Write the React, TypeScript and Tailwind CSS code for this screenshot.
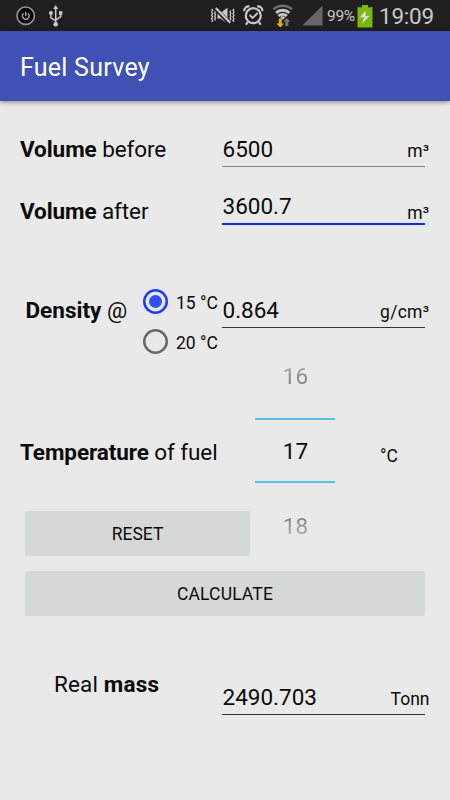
import { useState } from 'react';
import type { ReactNode } from 'react';

const StatusBar = () => (
    <div className="flex h-[31px] items-center bg-[#1f1f1f] text-[#c8c8c8]">
        {/* Notifications */}
        <svg className="ml-4 shrink-0" width="20" height="20" viewBox="0 0 20 20" fill="none">
            <circle cx="9.7" cy="9.7" r="8.7" fill="#050505" stroke="#929292" strokeWidth="1.7" />
            <path d="M7.5 7.4a3.4 3.4 0 1 0 4.5 0M9.75 5.7v4.2" stroke="#a0a0a0" strokeWidth="1.5" />
        </svg>
        <svg className="ml-3 shrink-0" width="16" height="24" viewBox="0 0 16 24" fill="none" stroke="currentColor" strokeWidth="1.5">
            <path d="M7.7 3.5v17M2.8 9.5v4l4.9 3.4M12.7 9.5v3l-5 3.6" />
            <path d="m7.7 1-2.5 4h5z" fill="currentColor" stroke="none" />
            <circle cx="2.9" cy="9" r="2" fill="currentColor" stroke="none" />
            <path d="M11 7.2h3.4v3.6H11z" fill="currentColor" stroke="none" />
            <circle cx="7.7" cy="20.3" r="2.3" fill="currentColor" stroke="none" />
        </svg>

        {/* System icons */}
        <svg className="ml-[146px] shrink-0" width="26" height="20" viewBox="0 0 26 20" fill="none" stroke="currentColor">
            <path d="m1.6 3 1 1.3-1 1.7 1 1.7-1 1.7 1 1.7-1 1.7 1 1.7-1 1.5M4.7 4.5l.8 1.2-.8 1.5.8 1.5-.8 1.5.8 1.5-.8 1.5.8 1.3M24 3l-1 1.3 1 1.7-1 1.7 1 1.7-1 1.7 1 1.7-1 1.7 1 1.5M20.8 4.5 20 5.7l.8 1.5-.8 1.5.8 1.5-.8 1.5.8 1.5-.8 1.3" strokeWidth="1.3" />
            <path d="M7.5 6.8h3l7-5v15.8l-7-5h-3z" fill="currentColor" stroke="none" />
            <path d="M5.5 2.5 20 17.5" stroke="#1f1f1f" strokeWidth="4.2" />
            <path d="M5.8 2 20.2 16.8" strokeWidth="2.2" />
        </svg>
        <svg className="ml-[7px] shrink-0" width="21" height="21" viewBox="0 0 21 21" fill="none" stroke="currentColor">
            <circle cx="10.3" cy="10.7" r="7.5" strokeWidth="2.2" />
            <path d="m6.6 10 3 3 5-5" strokeWidth="1.9" />
            <path d="M1.2 6.2A4.5 4.5 0 0 1 6.5 1.4M14.2 1.4a4.5 4.5 0 0 1 5.2 4.8M4.6 17 3 19.8M16 17l1.6 2.8" strokeWidth="2.2" />
        </svg>
        <svg className="ml-2 shrink-0" width="22" height="24" viewBox="0 0 22 24" fill="none">
            <path d="M1.4 5.3a14 14 0 0 1 18.6 0" stroke="#6e6e6e" strokeWidth="2.6" />
            <path d="M4.1 8.8a10 10 0 0 1 13.2 0M6.5 12a6.4 6.4 0 0 1 8.4 0" stroke="#c8c8c8" strokeWidth="2.9" />
            <path d="M10.7 12.2c-1.2 0-2 .3-2.6.8l2.6 3 2.6-3c-.6-.5-1.4-.8-2.6-.8z" fill="#c8c8c8" />
            <path d="M6.8 14.5h3v5H12l-3.7 4-3.8-4h2.3z" fill="#e0b010" />
            <path d="M13.3 22v-4.2h-2L14.8 14l3.5 3.8h-2V22z" fill="#777" />
        </svg>
        <svg className="ml-2 shrink-0" width="21" height="21" viewBox="0 0 21 21">
            <path d="M20.5.5v20H.3z" fill="#666" />
        </svg>
        <span className="ml-1 w-[30px] whitespace-nowrap pt-px text-[15.5px] leading-5 tracking-[-0.3px]">99%</span>
        <svg className="mt-px shrink-0" width="16" height="23" viewBox="0 0 16 23">
            <path d="M5 0h6v2.2h4.5v20.3H.5V2.2H5z" fill="#7cb70f" />
            <path d="m8.8 5.6-6 7 4.2-.3-2 6.5 7.8-8-4.3.2z" fill="#deded8" />
        </svg>
        <span className="ml-[6px] text-[22.5px] leading-[26px] tracking-[-0.25px]">19:09</span>
    </div>
);

interface FieldProps {
    value: string;
    unit: string;
    className: string;
    unitClassName: string;
}

const Field = ({ value, unit, className, unitClassName }: FieldProps) => (
    <div className={`relative w-[203px] pl-[0.5px] leading-[26px] ${className}`}>
        {value}
        <span className={`absolute -right-[4.5px] text-[17.5px] leading-5 ${unitClassName}`}>{unit}</span>
    </div>
);

const Label = ({ className, children }: { className: string; children: ReactNode }) => (
    <div className={`w-[222px] shrink-0 whitespace-nowrap leading-[26px] ${className}`}>{children}</div>
);

export default function App() {
    const [base, setBase] = useState(15);

    return (
        <div className="flex h-[800px] w-[450px] flex-col overflow-hidden bg-[#e9e9e9] font-[Roboto,sans-serif] text-[22.5px] text-[#0b0b0b]">
            <StatusBar />
            <header className="z-10 h-[70px] bg-[#3f51b5] pl-5 pt-[21px] text-[25px] leading-8 tracking-[0.25px] text-white shadow-[0_1px_5px_rgba(0,0,0,0.45)]">
                Fuel Survey
            </header>

            <main>
                <div className="flex h-[91px] pt-[35px]">
                    <Label className="pl-5 tracking-[-0.08px]"><b>Volume</b> before</Label>
                    <Field value="6500" unit="m³" className="h-[31px] border-b border-[#858585]" unitClassName="top-[5px] tracking-[0.3px]" />
                </div>
                <div className="flex h-[96px]">
                    <Label className="pl-5 pt-[6px] tracking-[-0.1px]"><b>Volume</b> after</Label>
                    <Field value="3600.7" unit="m³" className="h-[33px] border-b-2 border-[#0a2cff] pt-px" unitClassName="top-[11px] tracking-[0.3px]" />
                </div>

                <div className="flex h-[72px]">
                    <div className="flex w-[222px] shrink-0">
                        <div className="w-[118px] whitespace-nowrap pl-[25.5px] pt-[9px] leading-[26px]"><b>Density</b> @</div>
                        <div className="flex flex-col pl-[25px] pt-px">
                            {[15, 20].map((t) => (
                                <button
                                    key={t}
                                    onClick={() => setBase(t)}
                                    className="flex h-10 w-[79px] shrink-0 items-start gap-2 whitespace-nowrap text-[17.5px] leading-5"
                                >
                                    <span
                                        className={`flex size-[25px] shrink-0 items-center justify-center rounded-full ${base === t ? 'shadow-[inset_0_0_0_2.5px_#1c3cff]' : 'shadow-[inset_0_0_0_2.5px_#686868]'
                                            }`}
                                    >
                                        {base === t && <span className="size-[13px] rounded-full bg-[#304ffe]" />}
                                    </span>
                                    <span className="pt-1">{t} °C</span>
                                </button>
                            ))}
                        </div>
                    </div>
                    <Field value="0.864" unit="g/cm³" className="mt-[9px] h-[31px] border-b border-[#333]" unitClassName="top-[5px] tracking-[0.3px]" />
                </div>

                <div className="flex h-[211px]">
                    <div className="w-[255px] shrink-0">
                        <Label className="h-[151px] pl-5 pt-[79px] tracking-[-0.08px]"><b>Temperature</b> of fuel</Label>
                        <button className="ml-[25px] h-[45px] w-[225px] rounded-[2px] bg-[#d6d8d7] pt-px text-[17.5px]">RESET</button>
                    </div>
                    {/* Number picker */}
                    <div className="w-20 text-center leading-[26px]">
                        <div className="h-[58px] bg-linear-to-b from-[#a8a8a8] from-10% to-[#777] to-45% bg-clip-text pl-px pt-[3px] text-transparent">16</div>
                        <div className="h-[65px] border-y-2 border-[#58c0e8] pl-px pt-[18px]">17</div>
                        <div className="bg-linear-to-b from-[#777] from-55% to-[#aaa] to-90% bg-clip-text pl-px pt-[30px] text-transparent">18</div>
                    </div>
                    <span className="ml-[45px] mt-[86px] text-[17.5px] leading-5">°C</span>
                </div>

                <button className="ml-[25px] block h-[45px] w-[400px] rounded-[2px] bg-[#d6d8d7] pt-[2px] text-[17.5px] tracking-[0.15px]">CALCULATE</button>

                <div className="flex pt-[55px]">
                    <Label className="pl-[54px]"><span className="tracking-[0.15px]">Real <b>mass</b></span></Label>
                    <Field value="2490.703" unit="Tonn" className="mt-[13px] h-[31px] border-b border-[#333]" unitClassName="top-[5px]" />
                </div>
            </main>
        </div>
    );
}
